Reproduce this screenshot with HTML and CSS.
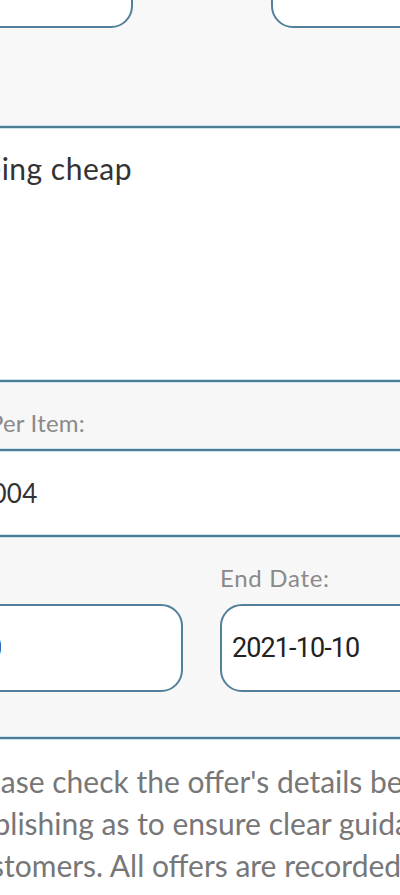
FILE: index.html
```html
<!DOCTYPE html>
<html lang="en">
<head>
<meta charset="utf-8">
<title>Create Offer</title>
<link rel="stylesheet" href="styles.css">
</head>
<body>
<div class="screen">
  <section class="top-band">
    <div class="top-boxes">
      <div class="top-box"></div>
      <div class="top-box"></div>
    </div>
  </section>
  <div class="rule"></div>
  <section class="desc">
    <p class="desc-text">being cheap</p>
  </section>
  <div class="rule"></div>
  <section class="label-band">
    <span class="label shift-label">Price Per Item:</span>
  </section>
  <div class="rule"></div>
  <section class="value-row">
    <span class="value shift-value">1004</span>
  </section>
  <div class="rule"></div>
  <section class="dates-band">
    <div class="dates">
      <div class="date-col">
        <span class="label">Start Date:</span>
        <div class="date-box"><span class="date-text">2021-09-10</span></div>
      </div>
      <div class="date-col">
        <span class="label">End Date:</span>
        <div class="date-box"><span class="date-text">2021-10-10</span></div>
      </div>
    </div>
  </section>
  <div class="rule"></div>
  <section class="note">
    <p class="note-text">Please check the offer's details before<br>publishing as to ensure clear guidance to<br>customers. All offers are recorded and</p>
  </section>
</div>
</body>
</html>
```

FILE: styles.css
```css
* { box-sizing: border-box; }
html, body {
  margin: 0;
  padding: 0;
}
body {
  width: 400px;
  height: 895px;
  overflow: hidden;
  background: #ffffff;
  font-family: Lato, "Noto Sans", sans-serif;
}
.screen {
  display: flex;
  flex-direction: column;
  width: 400px;
  overflow: hidden;
}
.rule {
  height: 2px;
  flex: none;
  background: #4f7c95;
  box-shadow: 0 -1px 0 #cbe4ef, 0 1px 0 #cbe4ef;
  position: relative;
  z-index: 1;
}
.top-band {
  height: 126px;
  background: #f8f8f8;
}
.top-boxes {
  display: grid;
  grid-template-columns: 321px 321px;
  column-gap: 138px;
  margin-left: -188px;
  margin-top: -40px;
}
.top-box {
  height: 68px;
  background: #ffffff;
  border: 2px solid #527f9a;
  border-radius: 22px;
}
.desc {
  height: 252px;
  background: #ffffff;
  padding-top: 22px;
}
.desc-text {
  margin: 0 0 0 -32px;
  font-size: 30px;
  line-height: 36px;
  letter-spacing: 0.5px;
  color: #333333;
  white-space: nowrap;
}
.label-band {
  height: 67px;
  background: #f7f7f7;
  padding-top: 26px;
}
.label {
  display: block;
  font-size: 24px;
  line-height: 30px;
  letter-spacing: 0.7px;
  color: #8a8a8a;
  white-space: nowrap;
}
.shift-label {
  margin-left: -71px;
  letter-spacing: 0.2px;
}
.value-row {
  height: 84px;
  background: #ffffff;
  padding-top: 27px;
}
.value {
  display: block;
  font-size: 26px;
  line-height: 30px;
  letter-spacing: 0.3px;
  color: #333333;
}
.shift-value {
  margin-left: -24px;
}
.dates-band {
  height: 200px;
  background: #f7f7f7;
  padding-top: 26px;
}
.dates {
  display: grid;
  grid-template-columns: 321px 321px;
  column-gap: 37px;
  margin-left: -138px;
}
.date-col {
  display: flex;
  flex-direction: column;
  gap: 11px;
}
.date-box {
  height: 88px;
  background: #ffffff;
  border: 2px solid #527f9a;
  border-radius: 22px;
  display: flex;
  align-items: center;
  padding: 0 10px;
}
.date-text {
  font-family: Roboto, "Liberation Sans", sans-serif;
  font-size: 27px;
  line-height: 34px;
  letter-spacing: -0.9px;
  color: #222222;
}
.note {
  flex: 1;
  background: #ffffff;
  padding-top: 21px;
}
.note-text {
  margin: 0 0 0 -40px;
  font-size: 30px;
  line-height: 42px;
  color: #777777;
  white-space: nowrap;
}
```
